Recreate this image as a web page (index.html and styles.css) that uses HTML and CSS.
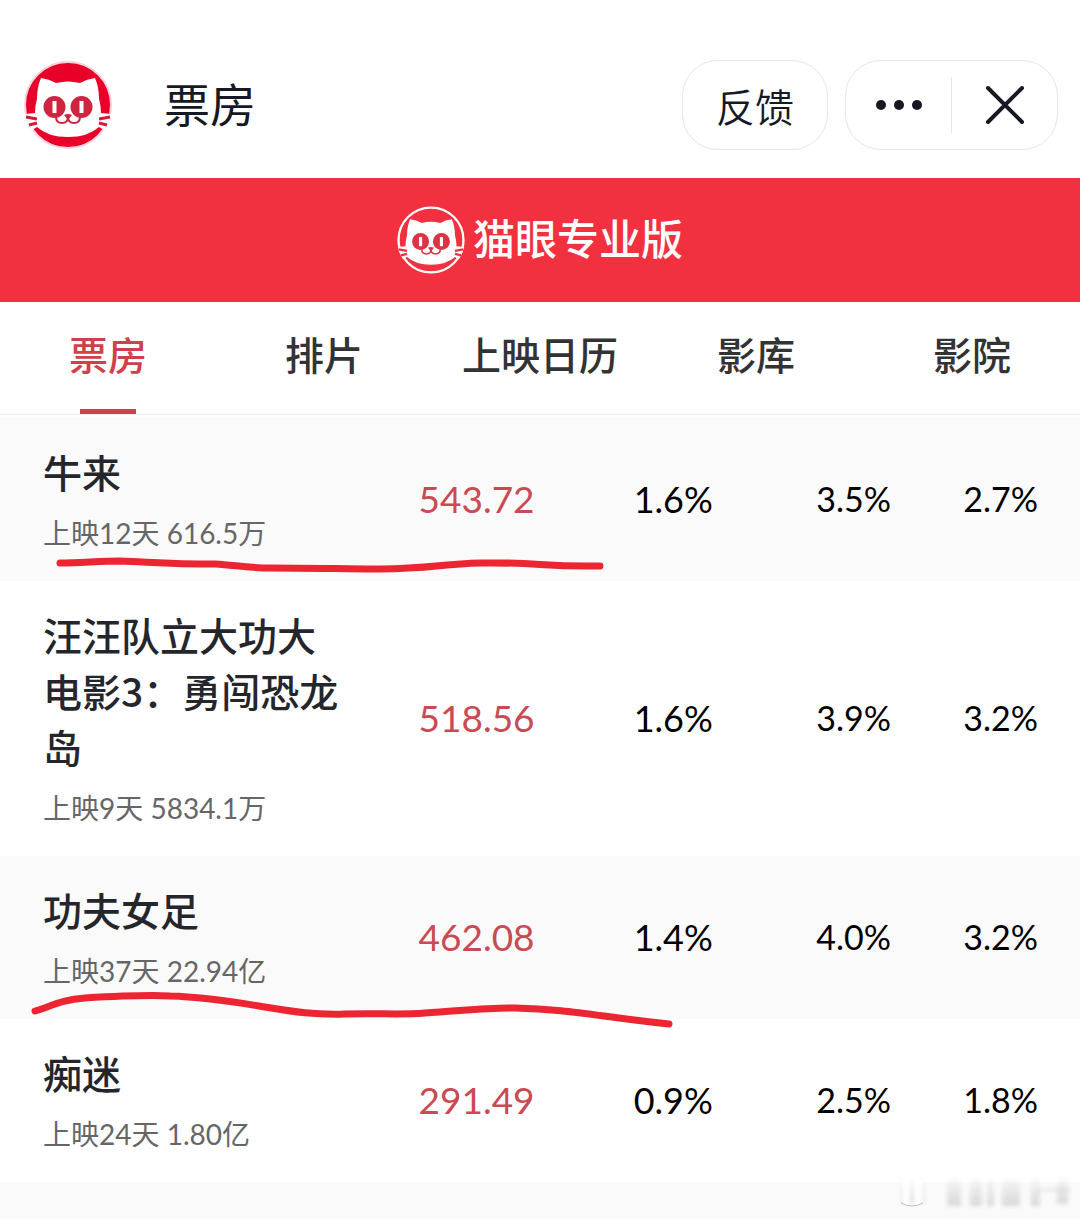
FILE: index.html
```
<!DOCTYPE html>
<html lang="zh-CN">
<head>
    <meta charset="UTF-8">
    <meta name="viewport" content="width=device-width, initial-scale=1.0">
    <title>票房</title>
    <link rel="stylesheet" href="styles.css">
</head>
<body>

<svg class="defs" width="0" height="0" aria-hidden="true">
    <symbol id="cat" viewBox="0 0 88 88">
        <path class="face" d="M17 17 Q25 18 32 22 Q44 19 56 22 Q63 18 71 17 Q75 26 75 38 Q77 45 77 52 L87 53 Q85 62 80 69 L75 66 Q64 76 44 76 Q24 76 13 66 L8 69 Q3 62 1 53 L11 52 Q11 45 13 38 Q13 26 17 17Z"/>
        <path class="whisker" d="M2 56 L13 58 M5 64 L13 62 M86 56 L75 58 M83 64 L75 62"/>
        <circle class="eye" cx="30.500" cy="46" r="11"/>
        <circle class="eye" cx="57.500" cy="46" r="11"/>
        <path class="pupil" d="M30.500 40 V52 M57.500 40 V52"/>
        <path class="nose" d="M40 54 Q44 52 48 54 L44 59Z"/>
        <path class="mouth" d="M32 56 Q32 62 38 62 Q44 62 44 56 Q44 62 50 62 Q56 62 56 56"/>
    </symbol>
</svg>

<div class="page">
    <header class="topbar">
        <svg class="logo" viewBox="0 0 88 88" aria-label="猫眼">
            <circle cx="44" cy="44" r="43"/>
            <use href="#cat"/>
        </svg>
        <h1>票房</h1>
        <button class="feedback">反馈</button>
        <div class="capsule">
            <button aria-label="更多">
                <svg width="46" height="12" viewBox="0 0 46 12"><circle cx="5" cy="6" r="5"/><circle cx="23" cy="6" r="5"/><circle cx="41" cy="6" r="5"/></svg>
            </button>
            <button aria-label="关闭">
                <svg width="40" height="40" viewBox="0 0 40 40"><path d="M3 3 L37 37 M37 3 L3 37"/></svg>
            </button>
        </div>
    </header>

    <div class="banner">
        <svg class="logo" viewBox="0 0 88 88" aria-hidden="true">
            <circle cx="44" cy="44" r="42"/>
            <use href="#cat"/>
        </svg>
        <span>猫眼专业版</span>
    </div>

    <nav class="tabs">
        <a class="active" href="#">票房</a>
        <a href="#">排片</a>
        <a href="#">上映日历</a>
        <a href="#">影库</a>
        <a href="#">影院</a>
    </nav>

    <div class="list">
        <table>
            <tbody>
                <tr>
                    <th scope="row">牛来<small>上映12天 616.5万</small></th>
                    <td class="box">543.72</td>
                    <td class="share">1.6%</td>
                    <td>3.5%</td>
                    <td>2.7%</td>
                </tr>
                <tr>
                    <th scope="row">汪汪队立大功大电影3：勇闯恐龙岛<small>上映9天 5834.1万</small></th>
                    <td class="box">518.56</td>
                    <td class="share">1.6%</td>
                    <td>3.9%</td>
                    <td>3.2%</td>
                </tr>
                <tr>
                    <th scope="row">功夫女足<small>上映37天 22.94亿</small></th>
                    <td class="box">462.08</td>
                    <td class="share">1.4%</td>
                    <td>4.0%</td>
                    <td>3.2%</td>
                </tr>
                <tr>
                    <th scope="row">痴迷<small>上映24天 1.80亿</small></th>
                    <td class="box">291.49</td>
                    <td class="share">0.9%</td>
                    <td>2.5%</td>
                    <td>1.8%</td>
                </tr>
            </tbody>
        </table>
        <!-- hand-drawn marks -->
        <svg class="marks" width="700" height="620" viewBox="0 0 700 620" aria-hidden="true">
            <path d="M60 145 C80 145 100 143 120 143 C150 144 170 146 215 146 C235 147 245 150 270 150 C310 150 350 151 380 151 C430 151 440 146 480 145 C540 144 540 149 600 148"/>
            <path d="M35 593 C52 588 60 582 85 580 C120 578 150 577 170 578 C210 579 240 585 265 589 C295 594 315 597 345 596 C380 595 400 597 425 595 C460 593 490 589 515 590 C570 591 600 599 669 606"/>
        </svg>
    </div>
    <div class="next-row"></div>
</div>

<svg class="watermark" width="180" height="40" viewBox="0 0 180 40" aria-hidden="true">
    <defs>
        <linearGradient id="fade" x1="0" y1="0" x2="0" y2="1">
            <stop offset="0" stop-color="#999" stop-opacity="0"/>
            <stop offset="1" stop-color="#999" stop-opacity=".35"/>
        </linearGradient>
    </defs>
    <path class="cup" d="M1 6 V31 Q12 37 23 31 V6Z"/>
    <path class="rim" d="M1 31 Q12 37 23 31"/>
    <g class="streaks">
        <rect x="0" y="4" width="2" height="27"/>
        <rect x="10" y="4" width="4" height="28"/>
        <rect x="22" y="4" width="2" height="27"/>
        <rect x="47" y="4" width="14" height="30"/>
        <rect x="70" y="4" width="12" height="30"/>
        <rect x="87" y="4" width="7" height="30"/>
        <rect x="102" y="4" width="18" height="30"/>
        <rect x="131" y="4" width="9" height="30"/>
        <rect x="157" y="4" width="11" height="28"/>
        <rect x="138" y="16" width="32" height="3"/>
    </g>
</svg>

</body>
</html>
```
FILE: styles.css
```
* {
    box-sizing: border-box;
}
body {
    margin: 0;
    font-family: Lato, "Noto Sans CJK SC", sans-serif;
    background-color: #fff;
    color: #24262b;
}
.page {
    display: flex;
    flex-direction: column;
    min-height: 100vh;
}
.defs {
    position: absolute;
}
button {
    border: none;
    background: none;
    font-family: inherit;
    color: #161823;
    cursor: pointer;
}

/* top bar */
.topbar {
    display: flex;
    align-items: center;
    padding: 60px 22px 28px 24px;
}
.topbar .logo {
    width: 88px;
    height: 88px;
    fill: #e8002a;
    --line: #cf2440;
    --back: #d81a3a;
}
.topbar .logo > circle {
    stroke: #fbd0d8;
    stroke-width: 2;
}
.topbar h1 {
    margin: 0 auto 0 52px;
    font-size: 46px;
    line-height: 60px;
    font-weight: 400;
    color: #161823;
}
.feedback {
    width: 146px;
    height: 90px;
    padding: 0;
    border: 1px solid #e6e6e8;
    border-radius: 36px;
    font-size: 39px;
    font-weight: 350;
}
.capsule {
    display: flex;
    align-items: center;
    width: 213px;
    height: 90px;
    margin-left: 17px;
    border: 1px solid #e6e6e8;
    border-radius: 36px;
}
.capsule button {
    flex: 1;
    display: flex;
    align-items: center;
    justify-content: center;
    height: 56px;
}
.capsule button + button {
    border-left: 1px solid #e6e6e8;
}
.capsule svg {
    fill: #161823;
    stroke-linecap: round;
}
.capsule path {
    stroke: #161823;
    stroke-width: 4;
}

/* cat face */
.face {
    fill: #fff;
}
.whisker {
    stroke: var(--back);
    stroke-width: 3;
}
.eye, .nose {
    fill: var(--line);
}
.pupil {
    stroke: #fff;
    stroke-width: 4;
}
.mouth {
    fill: none;
    stroke: var(--line);
    stroke-width: 2;
}

/* banner */
.banner {
    display: flex;
    align-items: center;
    justify-content: center;
    gap: 8px;
    height: 124px;
    background-color: #f23140;
    color: #fff;
    font-size: 42px;
    font-weight: 500;
}
.banner span {
    padding-bottom: 8px;
}
.banner .logo {
    width: 68px;
    height: 68px;
    fill: none;
    --line: #dc3345;
    --back: #f23140;
}
.banner .logo > circle {
    stroke: #fff;
    stroke-width: 3;
}

/* tabs */
.tabs {
    display: flex;
    border-bottom: 1px solid #ececec;
}
.tabs a {
    flex: 1;
    display: flex;
    flex-direction: column;
    align-items: center;
    height: 112px;
    padding-top: 25px;
    font-size: 39px;
    line-height: 56px;
    font-weight: 500;
    color: #333;
    text-decoration: none;
}
.tabs .active {
    color: #d13f4b;
}
.tabs .active::after {
    content: "";
    width: 56px;
    height: 5px;
    margin-top: auto;
    background-color: #cb414d;
}

/* movie list */
.list {
    position: relative;
    margin-top: 3px;
}
table {
    width: 100%;
    table-layout: fixed;
    border-collapse: collapse;
}
tr:nth-child(odd), .next-row {
    background-color: #fafafa;
}
th {
    width: 32%;
    padding: 25px 0 30px 43px;
    font-family: "Noto Sans CJK SC", sans-serif;
    font-size: 39px;
    line-height: 56px;
    font-weight: 500;
    text-align: left;
}
small {
    display: block;
    margin-top: 16px;
    font-family: Lato, "Noto Sans CJK SC", sans-serif;
    font-size: 28px;
    line-height: 36px;
    font-weight: 400;
    color: #666;
}
td {
    width: 16.5%;
    padding: 0 0 2px;
    font-size: 34px;
    text-align: right;
    color: #000;
}
td:last-child {
    width: 17.5%;
    padding-right: 42px;
}
.box {
    width: 17.5%;
    font-size: 37px;
    color: #c94a53;
}
.share {
    font-size: 36px;
}
.marks {
    position: absolute;
    top: 0;
    left: 0;
    pointer-events: none;
}
.marks path {
    fill: none;
    stroke: #eb2531;
    stroke-width: 7;
    stroke-linecap: round;
}
.next-row {
    flex: 1;
}

/* watermark in the corner */
.watermark {
    position: fixed;
    right: 0;
    bottom: 7px;
}
.cup {
    fill: #fff;
}
.rim {
    fill: none;
    stroke: #bbb;
    stroke-width: 1;
}
.streaks {
    fill: url(#fade);
    filter: blur(2px);
}
```
